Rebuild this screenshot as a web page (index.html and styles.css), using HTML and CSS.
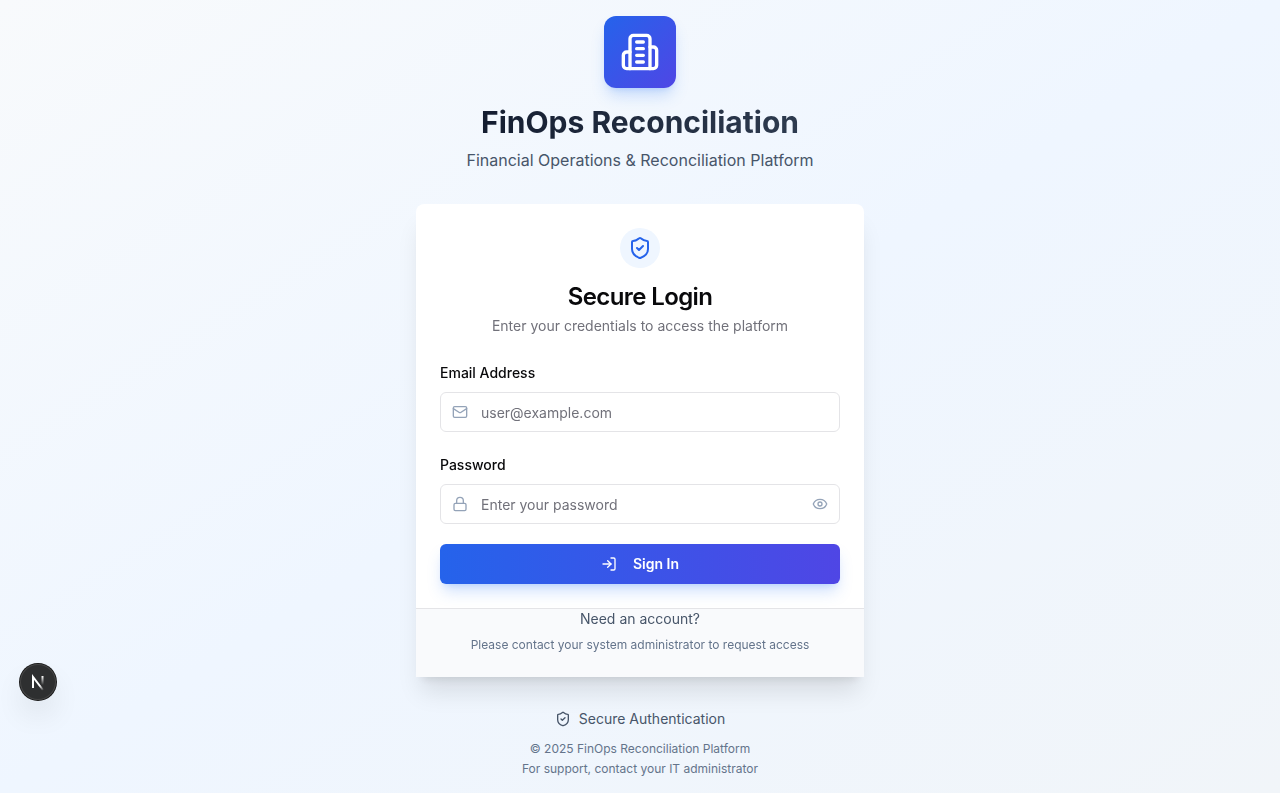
FILE: index.html
```html
<!DOCTYPE html>
<html lang="en">
<head>
<meta charset="utf-8">
<meta name="viewport" content="width=device-width, initial-scale=1">
<title>FinOps Reconciliation</title>
<link rel="stylesheet" href="styles.css">
</head>
<body>
<div class="page">
  <div class="column">
    <header class="brand">
      <div class="brand-logo">
        <svg class="icon icon-xl" viewBox="0 0 24 24" aria-hidden="true"><path d="M6 22V4a2 2 0 0 1 2-2h8a2 2 0 0 1 2 2v18Z"/><path d="M6 12H4a2 2 0 0 0-2 2v6a2 2 0 0 0 2 2h2"/><path d="M18 9h2a2 2 0 0 1 2 2v9a2 2 0 0 1-2 2h-2"/><path d="M10 6h4M10 10h4M10 14h4M10 18h4"/></svg>
      </div>
      <h1 class="brand-title">FinOps Reconciliation</h1>
      <p class="brand-subtitle">Financial Operations &amp; Reconciliation Platform</p>
    </header>

    <main class="card">
      <div class="card-header">
        <div class="card-badge">
          <svg class="icon icon-lg" viewBox="0 0 24 24" aria-hidden="true"><path d="M20 13c0 5-3.5 7.5-7.66 8.95a1 1 0 0 1-.67-.01C7.5 20.5 4 18 4 13V6a1 1 0 0 1 1-1c2 0 4.5-1.2 6.24-2.72a1.17 1.17 0 0 1 1.52 0C14.51 3.81 17 5 19 5a1 1 0 0 1 1 1z"/><path d="m9 12 2 2 4-4"/></svg>
        </div>
        <h2 class="card-title">Secure Login</h2>
        <p class="card-text">Enter your credentials to access the platform</p>
      </div>
      <form class="form">
        <div class="field">
          <div class="field-label"><label class="label" for="email">Email Address</label></div>
          <div class="control">
            <svg class="icon control-icon" viewBox="0 0 24 24" aria-hidden="true"><rect width="20" height="16" x="2" y="4" rx="2"/><path d="m22 7-8.97 5.7a1.94 1.94 0 0 1-2.06 0L2 7"/></svg>
            <input class="input" id="email" type="email" placeholder="user@example.com">
          </div>
        </div>
        <div class="field">
          <div class="field-label"><label class="label" for="password">Password</label></div>
          <div class="control">
            <svg class="icon control-icon" viewBox="0 0 24 24" aria-hidden="true"><rect width="18" height="11" x="3" y="11" rx="2"/><path d="M7 11V7a5 5 0 0 1 10 0v4"/></svg>
            <input class="input" id="password" type="password" placeholder="Enter your password">
            <button class="reveal" type="button" aria-label="Show password">
              <svg class="icon" viewBox="0 0 24 24" aria-hidden="true"><path d="M2.062 12.348a1 1 0 0 1 0-.696 10.75 10.75 0 0 1 19.876 0 1 1 0 0 1 0 .696 10.75 10.75 0 0 1-19.876 0"/><circle cx="12" cy="12" r="3"/></svg>
            </button>
          </div>
        </div>
        <button class="submit" type="submit">
          <svg class="icon" viewBox="0 0 24 24" aria-hidden="true"><path d="M15 3h4a2 2 0 0 1 2 2v14a2 2 0 0 1-2 2h-4"/><path d="m10 17 5-5-5-5"/><path d="M15 12H3"/></svg>
          Sign In
        </button>
      </form>
      <div class="card-footer">
        <p class="footer-question">Need an account?</p>
        <p class="footer-hint">Please contact your system administrator to request access</p>
      </div>
    </main>

    <footer class="legal">
      <p class="secure">
        <svg class="icon" viewBox="0 0 24 24" aria-hidden="true"><path d="M20 13c0 5-3.5 7.5-7.66 8.95a1 1 0 0 1-.67-.01C7.5 20.5 4 18 4 13V6a1 1 0 0 1 1-1c2 0 4.5-1.2 6.24-2.72a1.17 1.17 0 0 1 1.52 0C14.51 3.81 17 5 19 5a1 1 0 0 1 1 1z"/><path d="m9 12 2 2 4-4"/></svg>
        Secure Authentication
      </p>
      <div class="legal-lines">
        <p>© 2025 FinOps Reconciliation Platform</p>
        <p>For support, contact your IT administrator</p>
      </div>
    </footer>
  </div>
</div>
<button class="devtools" type="button" aria-label="Open developer tools">
  <svg class="devtools-mark" viewBox="0 0 36 36" fill="none" aria-hidden="true">
    <defs>
      <linearGradient id="mark-diagonal" x1="18" y1="18" x2="24" y2="26" gradientUnits="userSpaceOnUse"><stop stop-color="#fff"/><stop offset=".4" stop-color="#fff"/><stop offset="1" stop-color="#fff" stop-opacity="0"/></linearGradient>
      <linearGradient id="mark-stem" x1="22" y1="12" x2="22" y2="21" gradientUnits="userSpaceOnUse"><stop stop-color="#fff"/><stop offset="1" stop-color="#fff" stop-opacity="0"/></linearGradient>
    </defs>
    <path d="M13 24V13L23 26" stroke="url(#mark-diagonal)" stroke-width="2"/>
    <path d="M22.5 12V21" stroke="url(#mark-stem)" stroke-width="2"/>
  </svg>
</button>
</body>
</html>
```
FILE: styles.css
```css
*,
*::before,
*::after {
  box-sizing: border-box;
}

body {
  margin: 0;
  font-family: Inter, "Liberation Sans", sans-serif;
  font-size: 16px;
  line-height: 24px;
  color: #09090b;
}

h1,
h2,
p {
  margin: 0;
}

button,
input {
  font: inherit;
}

.page {
  display: flex;
  align-items: center;
  justify-content: center;
  min-height: 100vh;
  padding: 16px;
  background: linear-gradient(to bottom right, #f8fafc, #eff6ff, #f1f5f9);
}

.column {
  width: 100%;
  max-width: 448px;
}

.icon {
  display: block;
  flex: none;
  width: 16px;
  height: 16px;
  fill: none;
  stroke: currentColor;
  stroke-width: 2;
  stroke-linecap: round;
  stroke-linejoin: round;
}

.icon-lg {
  width: 24px;
  height: 24px;
}

.icon-xl {
  width: 40px;
  height: 40px;
}

.brand {
  display: flex;
  flex-direction: column;
  align-items: center;
  margin-bottom: 32px;
  text-align: center;
}

.brand-logo {
  padding: 16px;
  margin-bottom: 16px;
  border-radius: 12px;
  color: #fff;
  background: linear-gradient(to bottom right, #2563eb, #4f46e5);
  box-shadow: 0 10px 15px -3px rgba(59, 130, 246, 0.25), 0 4px 6px -4px rgba(59, 130, 246, 0.25);
}

.brand-title {
  width: 100%;
  margin-bottom: 8px;
  font-size: 30px;
  font-weight: 700;
  line-height: 36px;
  color: transparent;
  background: linear-gradient(to right, #0f172a, #334155);
  -webkit-background-clip: text;
  background-clip: text;
}

.brand-subtitle {
  color: #475569;
}

.card {
  border-radius: 8px 8px 0 0;
  background: rgba(255, 255, 255, 0.95);
  backdrop-filter: blur(4px);
  box-shadow: 0 20px 25px -5px rgba(0, 0, 0, 0.1), 0 8px 10px -6px rgba(0, 0, 0, 0.1);
}

.card-header {
  display: flex;
  flex-direction: column;
  align-items: center;
  padding: 24px;
  text-align: center;
}

.card-badge {
  padding: 8px;
  margin-bottom: 16px;
  border-radius: 50%;
  color: #2563eb;
  background: #eff6ff;
}

.card-title {
  margin-bottom: 6px;
  font-size: 24px;
  font-weight: 600;
  line-height: 26px;
  letter-spacing: -0.025em;
}

.card-text {
  font-size: 14px;
  line-height: 20px;
  color: #71717a;
}

.form {
  display: flex;
  flex-direction: column;
  gap: 20px;
  padding: 0 24px 24px;
}

.field {
  display: flex;
  flex-direction: column;
  gap: 8px;
}

.label {
  font-size: 14px;
  font-weight: 500;
  line-height: 20px;
}

.control {
  position: relative;
}

.control-icon {
  position: absolute;
  top: 12px;
  left: 12px;
  color: #94a3b8;
}

.input {
  display: block;
  width: 100%;
  height: 40px;
  padding: 8px 40px;
  border: 1px solid #e4e4e7;
  border-radius: 6px;
  font-size: 14px;
  line-height: 20px;
  color: #09090b;
  background: #fff;
}

.input::placeholder {
  color: #71717a;
}

.reveal {
  position: absolute;
  top: 12px;
  right: 12px;
  padding: 0;
  border: 0;
  color: #94a3b8;
  background: none;
}

.submit {
  display: flex;
  align-items: center;
  justify-content: center;
  gap: 16px;
  height: 40px;
  border: 0;
  border-radius: 6px;
  font-size: 14px;
  font-weight: 600;
  line-height: 20px;
  color: #fff;
  background: linear-gradient(to right, #2563eb, #4f46e5);
  box-shadow: 0 10px 15px -3px rgba(59, 130, 246, 0.25), 0 4px 6px -4px rgba(59, 130, 246, 0.25);
}

.card-footer {
  display: flex;
  flex-direction: column;
  gap: 8px;
  padding: 0 24px 24px;
  border-top: 1px solid #e4e4e7;
  text-align: center;
  background: #f9fafc;
}

.footer-question {
  font-size: 14px;
  line-height: 20px;
  color: #475569;
}

.footer-hint {
  font-size: 12px;
  line-height: 16px;
  color: #64748b;
}

.legal {
  display: flex;
  flex-direction: column;
  gap: 12px;
  margin-top: 32px;
  text-align: center;
}

.secure {
  display: flex;
  align-items: center;
  justify-content: center;
  gap: 8px;
  font-size: 14px;
  line-height: 20px;
  color: #475569;
}

.legal-lines {
  display: flex;
  flex-direction: column;
  gap: 4px;
  font-size: 12px;
  line-height: 16px;
  color: #64748b;
}

.devtools {
  position: fixed;
  bottom: 93px;
  left: 20px;
  width: 36px;
  height: 36px;
  padding: 0;
  border: 0;
  border-radius: 50%;
  background: #2e2f30;
  box-shadow: 0 0 0 1px #171717, inset 0 0 0 1px #464646, 0 16px 32px -8px rgba(0, 0, 0, 0.24);
}

.devtools-mark {
  display: block;
  width: 36px;
  height: 36px;
}
```
